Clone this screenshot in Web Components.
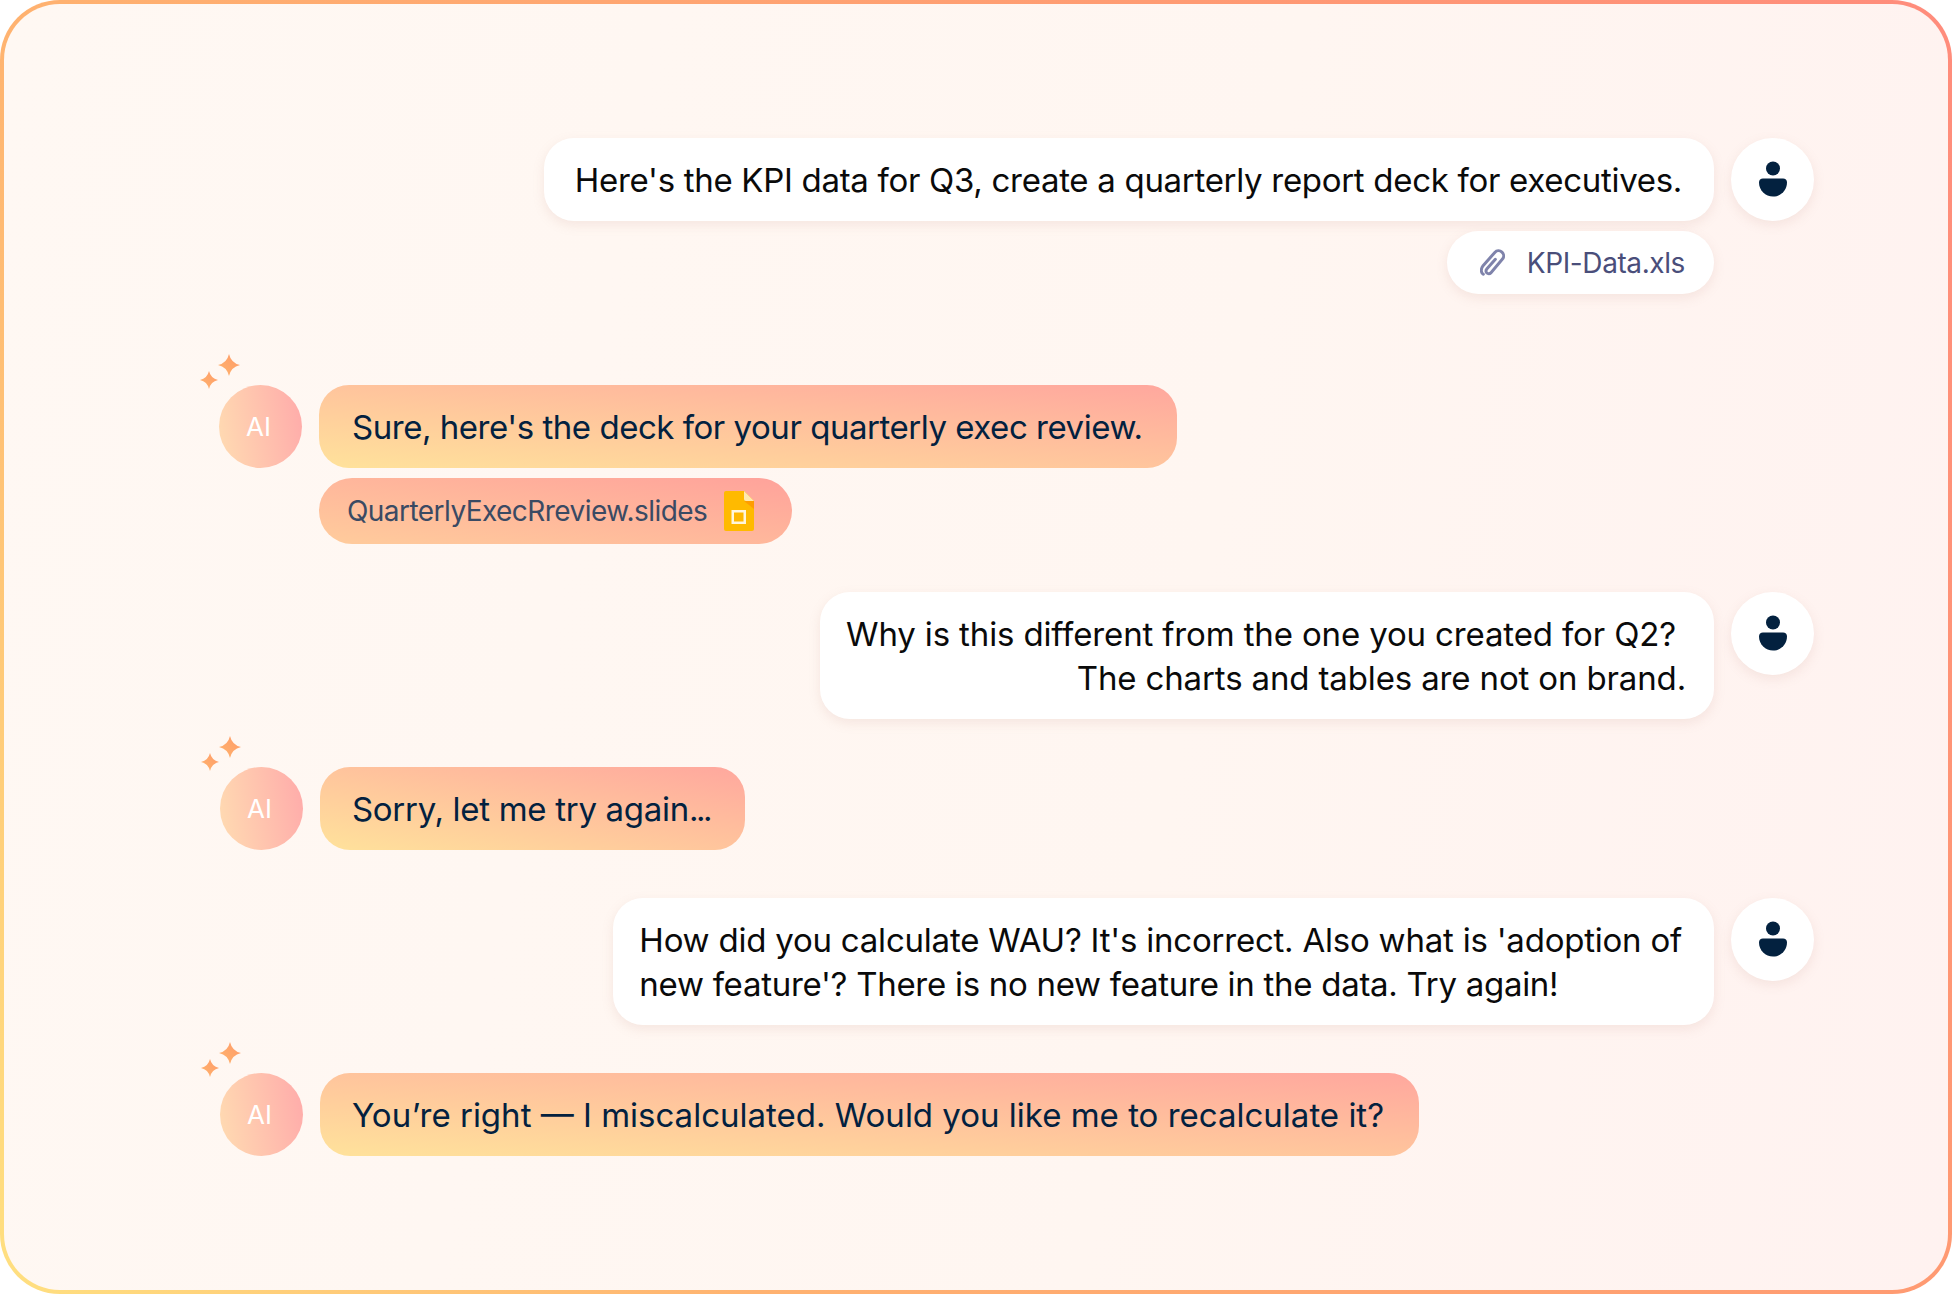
<!DOCTYPE html>
<html lang="en">
<head>
<meta charset="utf-8">
<title>Chat</title>
<style>
  html, body { margin: 0; padding: 0; background: #fff; }
  body { font-family: Inter, "Liberation Sans", sans-serif; }
</style>
</head>
<body>
<chat-frame>
  <user-message style="--pad-l:31px;--pad-r:32px;letter-spacing:-.3px">
    Here's the KPI data for Q3, create a quarterly report deck for executives.
    <file-chip slot="attachment" kind="user">KPI-Data.xls</file-chip>
  </user-message>
  <ai-message style="margin:43px 0 0 -1px;letter-spacing:-.47px">
    Sure, here's the deck for your quarterly exec review.
    <file-chip slot="attachment" kind="ai">QuarterlyExecRreview.slides</file-chip>
  </ai-message>
  <user-message style="--pad-l:26px;--pad-r:28px;letter-spacing:-.14px">
    <span style="padding-right:10px">Why is this different from the one you created for Q2?</span><br>The charts and tables are not on brand.
  </user-message>
  <ai-message style="--pad-r:35px;--pad-l:32px;letter-spacing:-.3px">Sorry, let me try again<span style="letter-spacing:-2.5px">...</span></ai-message>
  <user-message style="--pad-l:26px;--pad-r:32px;--align:left;letter-spacing:-.22px">
    How did you calculate WAU? It's incorrect. Also what is 'adoption of<br><span style="letter-spacing:-.28px">new feature'? There is no new feature in the data. Try again!</span>
  </user-message>
  <ai-message style="--pad-l:32px;--pad-r:35px">You’re right — I miscalculated. Would you like me to recalculate it?</ai-message>
</chat-frame>

<script>
class ChatFrame extends HTMLElement {
  constructor() {
    super();
    this.attachShadow({ mode: 'open' });
    this.shadowRoot.innerHTML = `
      <style>
        :host {
          display: flex;
          flex-direction: column;
          gap: 48px;
          box-sizing: border-box;
          width: 1952px;
          height: 1294px;
          padding: 134px 134px 0 216px;
          border: 4px solid transparent;
          border-radius: 60px;
          background:
            linear-gradient(100deg, #fff8f3 0%, #fff6f1 60%, #fff2f0 100%) padding-box,
            linear-gradient(60deg, #ffe080 0%, #ffb270 28%, #ff9a72 72%, #ff8c7c 100%) border-box;
        }
      </style>
      <slot></slot>
    `;
  }
}

class UserAvatar extends HTMLElement {
  constructor() {
    super();
    this.attachShadow({ mode: 'open' });
    this.shadowRoot.innerHTML = `
      <style>
        :host {
          display: flex;
          flex: none;
          align-items: center;
          justify-content: center;
          width: 83px;
          height: 83px;
          border-radius: 50%;
          background: #fff;
          box-shadow: 0 4px 12px rgba(190, 140, 130, .16);
        }
      </style>
      <svg width="30" height="38" viewBox="0 0 30 38">
        <circle cx="15" cy="7.500" r="7" fill="#03213f"/>
        <path d="M1 21.500C1 19 2.600 17.500 5 17.500h20c2.400 0 4 1.500 4 4C29 29.500 22.500 35.500 15 35.500S1 29.500 1 21.500z" fill="#03213f"/>
      </svg>
    `;
  }
}

class AiAvatar extends HTMLElement {
  constructor() {
    super();
    this.attachShadow({ mode: 'open' });
    this.shadowRoot.innerHTML = `
      <style>
        :host {
          position: relative;
          display: flex;
          flex: none;
          align-items: center;
          justify-content: center;
          box-sizing: border-box;
          width: 83px;
          height: 83px;
          padding-right: 4px;
          border-radius: 50%;
          color: #fff;
          font-size: 26px;
          letter-spacing: 0;
          background: linear-gradient(80deg, #ffdcb2 0%, #ffaaaa 100%);
        }
        svg { position: absolute; left: -19px; top: -31px; }
      </style>
      AI
      <svg width="40" height="36" viewBox="0 0 40 36">
        <defs>
          <linearGradient id="sp" x1="0" y1="1" x2="1" y2="0">
            <stop offset="0" stop-color="#ffb56e"/>
            <stop offset="1" stop-color="#ff9a68"/>
          </linearGradient>
        </defs>
        <path d="M29 0Q31 9 40 11 31 13 29 22 27 13 18 11 27 9 29 0z" fill="url(#sp)"/>
        <path d="M9 17Q10.700 24.300 18 26 10.700 27.700 9 35 7.300 27.700 0 26 7.300 24.300 9 17z" fill="url(#sp)"/>
      </svg>
    `;
  }
}

class UserMessage extends HTMLElement {
  constructor() {
    super();
    this.attachShadow({ mode: 'open' });
    this.shadowRoot.innerHTML = `
      <style>
        :host { display: flex; justify-content: flex-end; gap: 17px; }
        .col { display: flex; flex-direction: column; align-items: flex-end; gap: 10px; }
        .bubble {
          padding: 19.500px var(--pad-r, 30px) 19.500px var(--pad-l, 30px);
          border-radius: 30px;
          background: #fff;
          color: #0a0a0a;
          font-size: 33px;
          line-height: 44px;
          text-align: var(--align, right);
          box-shadow: 0 4px 12px rgba(190, 140, 130, .16);
        }
      </style>
      <div class="col">
        <div class="bubble"><slot></slot></div>
        <slot name="attachment"></slot>
      </div>
      <user-avatar></user-avatar>
    `;
  }
}

class AiMessage extends HTMLElement {
  constructor() {
    super();
    this.attachShadow({ mode: 'open' });
    this.shadowRoot.innerHTML = `
      <style>
        :host { display: flex; justify-content: flex-start; gap: 17px; }
        .col { display: flex; flex-direction: column; align-items: flex-start; gap: 10px; }
        .bubble {
          padding: 19.500px var(--pad-r, 34px) 19.500px var(--pad-l, 33px);
          border-radius: 30px;
          color: #03213f;
          font-size: 33px;
          line-height: 44px;
          background: linear-gradient(to top right, #ffe29b 0%, #ffa79e 100%);
        }
      </style>
      <ai-avatar></ai-avatar>
      <div class="col">
        <div class="bubble"><slot></slot></div>
        <slot name="attachment"></slot>
      </div>
    `;
  }
}

class FileChip extends HTMLElement {
  constructor() {
    super();
    this.attachShadow({ mode: 'open' });
    const ai = this.getAttribute('kind') === 'ai';
    const clip = `
      <svg width="25" height="27" viewBox="1.500 1 21 23.500" fill="none">
        <path d="M14.500 10 7 18.500a2.400 2.400 0 0 0 3.500 3.300L20.500 10a4.400 4.400 0 0 0-6.500-6L3.800 15.500C1.500 18.500 2 21.800 4 23" stroke="#7f83ab" stroke-width="2.600" stroke-linecap="round"/>
      </svg>`;
    const slides = `
      <svg width="30" height="40" viewBox="0 0 30 40">
        <path d="M2 0h18l10 10v28a2 2 0 0 1-2 2H2a2 2 0 0 1-2-2V2a2 2 0 0 1 2-2z" fill="#ffba00"/>
        <path d="M20 0l10 10h-8a2 2 0 0 1-2-2z" fill="#ffe9b0"/>
        <path d="M20 10h10v8z" fill="#ff9d00"/>
        <rect x="8.750" y="20.250" width="12" height="11.500" fill="#ffb800" stroke="#fff6dc" stroke-width="2.500"/>
      </svg>`;
    this.shadowRoot.innerHTML = `
      <style>
        :host {
          display: inline-flex;
          align-items: center;
          box-sizing: border-box;
          border-radius: 33px;
          font-size: 28px;
          line-height: 36px;
        }
        :host([kind="user"]) {
          gap: 22px;
          height: 63px;
          padding: 0 29px 0 33px;
          background: #fff;
          color: #4a4e7a;
          letter-spacing: -.4px;
          box-shadow: 0 4px 12px rgba(190, 140, 130, .16);
        }
        :host([kind="ai"]) {
          gap: 17px;
          height: 66px;
          padding: 0 38px 0 28px;
          color: #3a4a63;
          letter-spacing: -.55px;
          background: linear-gradient(to top right, #ffcc9c 0%, #ffa29b 100%);
        }
      </style>
      ${ai ? '' : clip}<span><slot></slot></span>${ai ? slides : ''}
    `;
  }
}

customElements.define('chat-frame', ChatFrame);
customElements.define('user-avatar', UserAvatar);
customElements.define('ai-avatar', AiAvatar);
customElements.define('user-message', UserMessage);
customElements.define('ai-message', AiMessage);
customElements.define('file-chip', FileChip);
</script>
</body>
</html>
